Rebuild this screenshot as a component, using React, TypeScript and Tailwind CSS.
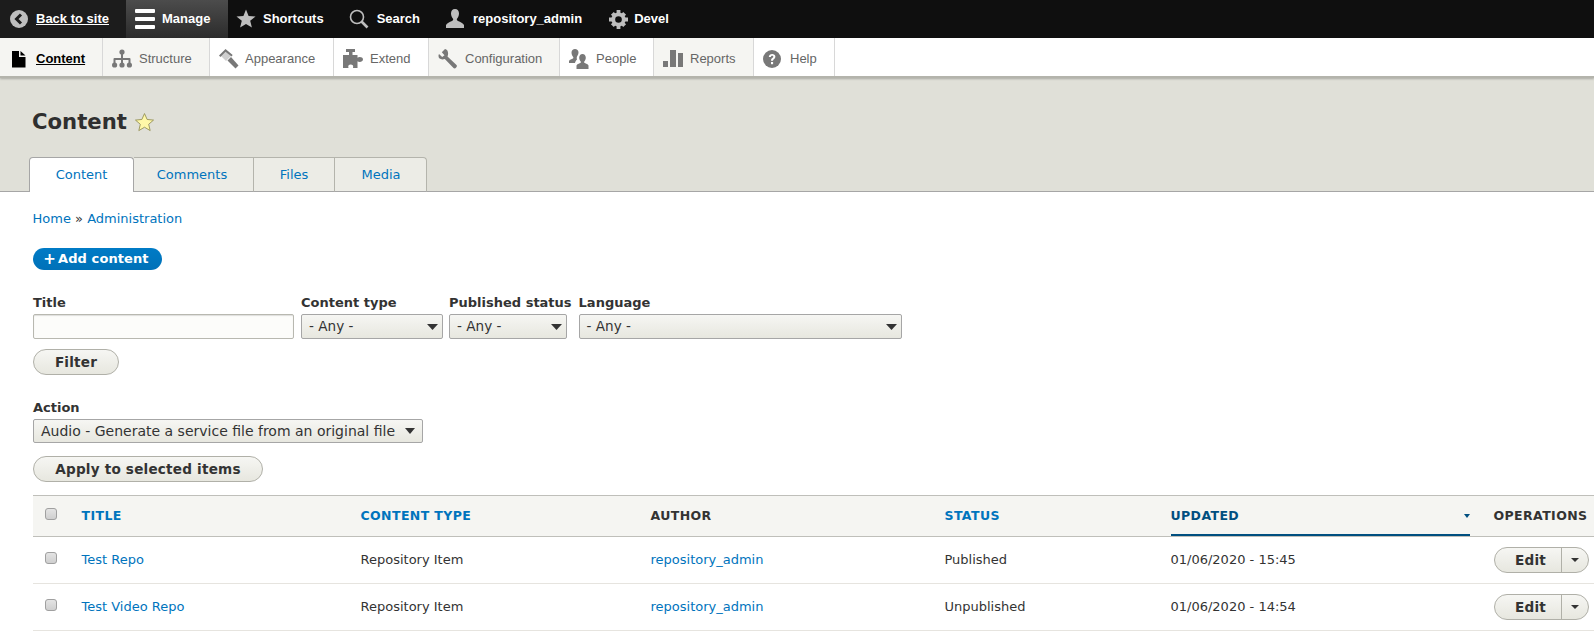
const sans = "font-['Liberation_Sans',Arial,sans-serif]";

function BackIcon() {
  return (
    <svg width="18" height="18" viewBox="0 0 18 18" className="shrink-0">
      <circle cx="9" cy="9" r="9" fill="#bebebe" />
      <path d="M11 4.500 6.500 9l4.500 4.500" fill="none" stroke="#1c1c1c" strokeWidth="3" />
    </svg>
  );
}

function MenuIcon() {
  return (
    <svg width="20" height="20" viewBox="0 0 20 20" className="shrink-0">
      <path d="M1 0h18a1 1 0 0 1 1 1v2a1 1 0 0 1-1 1H1a1 1 0 0 1-1-1V1a1 1 0 0 1 1-1zM1 8h18a1 1 0 0 1 1 1v2a1 1 0 0 1-1 1H1a1 1 0 0 1-1-1V9a1 1 0 0 1 1-1zM1 16h18a1 1 0 0 1 1 1v2a1 1 0 0 1-1 1H1a1 1 0 0 1-1-1v-2a1 1 0 0 1 1-1z" fill="#fff" />
    </svg>
  );
}

function StarIcon() {
  return (
    <svg width="20" height="20" viewBox="0 0 20 20" className="shrink-0">
      <path d="M10 0.500l2.600 6.400 6.900.5-5.300 4.400 1.700 6.700L10 15l-5.900 3.500 1.700-6.700L.5 7.400l6.900-.5z" fill="#bebebe" />
    </svg>
  );
}

function SearchIcon() {
  return (
    <svg width="20" height="20" viewBox="0 0 20 20" className="shrink-0">
      <circle cx="8" cy="8" r="6.500" fill="none" stroke="#bebebe" strokeWidth="1.600" />
      <path d="M12.500 12.500 18.500 18.500" stroke="#bebebe" strokeWidth="2.600" />
    </svg>
  );
}

function UserIcon() {
  return (
    <svg width="20" height="20" viewBox="0 0 20 20" className="shrink-0">
      <path d="M10 0c2.600 0 4 2 4 4.600 0 2.200-1 4-2 5.200-.5.700 0 1.600 1 2.200 2.500 1.300 5 1.800 6 4V19H1v-3c1-2.200 3.500-2.700 6-4 1-.6 1.500-1.500 1-2.200-1-1.200-2-3-2-5.200C6 2 7.400 0 10 0z" fill="#bebebe" />
    </svg>
  );
}

function CogIcon() {
  return (
    <svg width="19" height="19" viewBox="0 0 20 20" className="shrink-0">
      <circle cx="10" cy="10" r="5.500" fill="none" stroke="#bebebe" strokeWidth="4" />
      <path d="M8 0h4v4H8zM8 16h4v4H8zM0 8h4v4H0zM16 8h4v4h-4zM2 5l3-3 3 3-3 3zM12 5l3-3 3 3-3 3zM2 15l3-3 3 3-3 3zM12 15l3-3 3 3-3 3z" fill="#bebebe" />
    </svg>
  );
}

function FileIcon() {
  return (
    <svg width="14" height="18" viewBox="0 0 14 18" className="shrink-0">
      <path d="M0 1h7v6h6.500v10.500H0zM8.500 1l5 4.500h-5z" fill="#000" />
    </svg>
  );
}

function TreeIcon() {
  return (
    <svg width="20" height="19" viewBox="0 0 20 19" className="shrink-0">
      <circle cx="10" cy="3" r="2.600" fill="#787878" />
      <path d="M9 5h2v4h6.500a1 1 0 0 1 1 1v4h-2v-3H11v3H9v-3H3.500v3h-2v-4a1 1 0 0 1 1-1H9z" fill="#787878" />
      <circle cx="2.600" cy="16" r="2.600" fill="#787878" />
      <circle cx="10" cy="16" r="2.600" fill="#787878" />
      <circle cx="17.400" cy="16" r="2.600" fill="#787878" />
    </svg>
  );
}

function BrushIcon() {
  return (
    <svg width="20" height="20" viewBox="0 0 20 20" className="shrink-0">
      <path d="M6.500 1.500 1.500 6.500l5.500 5.500 5-5z" fill="#cfcfcf" />
      <path d="M6.500 0 0 6.500l1.400 1.400 5.100-5.100 6 4.700 1.200-1.400z" fill="#787878" />
      <path d="M8.500 11.500l3.500-3.500 7.500 8.500-3 3z" fill="#787878" />
    </svg>
  );
}

function PuzzleIcon() {
  return (
    <svg width="20" height="20" viewBox="0 0 20 20" className="shrink-0">
      <path d="M3 0h9v3H9.500v3H14.500v2.800c1.300-1.200 5.500-1 5.500 1.700s-4.200 2.900-5.500 1.700V19H10c.8-2.400-.6-3.500-2.300-3.500S4.600 16.600 5.500 19H0V6h6V3H3z" fill="#787878" />
    </svg>
  );
}

function WrenchIcon() {
  return (
    <svg width="20" height="20" viewBox="0 0 20 20" className="shrink-0">
      <path d="M7 0 3.800 3.200l2.700 3L4.200 8 1 5C-.8 9 2.500 11.500 6.800 10l8.700 9c1.600 1.500 4.500-1.300 3-3l-9-8.500C11 3.500 9.500 0.200 7 0z" fill="#787878" />
    </svg>
  );
}

function PeopleIcon() {
  return (
    <svg width="20" height="20" viewBox="0 0 20 20" className="shrink-0">
      <path d="M6 0c2 0 3.500 1.500 3.500 3.500 0 1-.3 2-.8 2.800C7.500 8 7.600 9.500 8 10.500 7 11.500 6 13 6 14H0v-2c.8-1.500 2.500-1.500 4-2.500.5-.4.500-1 0-1.700C3 6.500 2.500 5 2.500 3.500 2.500 1.500 4 0 6 0z" fill="#787878" />
      <path d="M13.500 5c2 0 3.300 1.600 3.300 3.700 0 1.500-.7 2.800-1.500 3.800-.4.600-.2 1.200.5 1.600 1.400.8 3 1 3.700 2.400V20H7.500v-3.500c.7-1.400 2.300-1.600 3.700-2.400.7-.4.900-1 .5-1.600-.8-1-1.500-2.300-1.500-3.800C10.200 6.600 11.500 5 13.500 5z" fill="#787878" />
    </svg>
  );
}

function BarsIcon() {
  return (
    <svg width="20" height="19" viewBox="0 0 20 19" className="shrink-0">
      <path d="M0 12h5v6H0zM7 1h6v17H7zM15 4h5v14h-5z" fill="#787878" />
    </svg>
  );
}

function HelpIcon() {
  return (
    <svg width="18" height="18" viewBox="0 0 18 18" className="shrink-0">
      <circle cx="9" cy="9" r="9" fill="#787878" />
      <path d="M5.800 7c0-4 6.600-4 6.600-.3 0 2.300-2.400 2.300-2.400 4H8c0-2.800 2.300-2.800 2.300-4 0-1.300-2.400-1.200-2.400.3z" fill="#fff" />
      <rect x="8" y="12" width="2.100" height="2.200" fill="#fff" />
    </svg>
  );
}

function Caret({ w = 11, h = 6, color = "#333" }: { w?: number; h?: number; color?: string }) {
  return (
    <svg width={w} height={h} viewBox="0 0 10 6" preserveAspectRatio="none" className="shrink-0">
      <path d="M0 0h10L5 6z" fill={color} />
    </svg>
  );
}

function TopItem({ icon, label, className }: { icon: React.ReactNode; label: string; className?: string }) {
  return (
    <div className={`flex h-full items-center font-bold text-white ${className ?? ""}`}>
      {icon}
      <span>{label}</span>
    </div>
  );
}

const subItems = [
  { label: "Structure", icon: <TreeIcon />, w: "w-[107px]", bg: "bg-[#f5f5f2]", gap: "gap-[7px]" },
  { label: "Appearance", icon: <BrushIcon />, w: "w-[124px]", bg: "bg-white", gap: "gap-[6px]" },
  { label: "Extend", icon: <PuzzleIcon />, w: "w-[95px]", bg: "bg-white", gap: "gap-[7px]" },
  { label: "Configuration", icon: <WrenchIcon />, w: "w-[131px]", bg: "bg-[#f5f5f2]", gap: "gap-[7px]" },
  { label: "People", icon: <PeopleIcon />, w: "w-[94px]", bg: "bg-white", gap: "gap-[7px]" },
  { label: "Reports", icon: <BarsIcon />, w: "w-[100px]", bg: "bg-[#f5f5f2]", gap: "gap-[7px]" },
  { label: "Help", icon: <HelpIcon />, w: "w-[81px]", bg: "bg-white", gap: "gap-[9px]" },
];

function SelectBox({ label, value, className }: { label: string; value: string; className: string }) {
  return (
    <div className="flex flex-col">
      <label className="mb-[2px] text-[13px] leading-[18px] font-bold text-[#333]">{label}</label>
      <div className={`flex h-[25px] items-center justify-between rounded-[2px] border border-[#a6a6a6] bg-linear-to-b from-[#f6f6f3] to-[#e7e7df] pr-[4px] pl-[7px] text-[13.6px] text-[#333] ${className}`}>
        <span>{value}</span>
        <Caret />
      </div>
    </div>
  );
}

function PillButton({ label, className }: { label: string; className: string }) {
  return (
    <button className={`flex h-[26px] items-center justify-center rounded-[13px] border border-[#b0b0a8] bg-linear-to-b from-[#f6f6f3] to-[#e7e7df] text-[13.6px] font-bold tracking-[0.2px] text-[#333] ${className}`}>
      {label}
    </button>
  );
}

function Checkbox() {
  return <div className="-mt-[5px] h-[12px] w-[12px] rounded-[3px] border border-[#a0a0a0] bg-linear-to-b from-[#e4e4e4] to-[#cfcfcf]" />;
}

function EditButton() {
  return (
    <div className="flex h-[26px] w-[95px] overflow-hidden rounded-[13px] border border-[#b0b0a8] bg-linear-to-b from-[#f6f6f3] to-[#e7e7df] text-[13.6px] font-bold tracking-[0.2px] text-[#333]">
      <span className="flex flex-1 items-center justify-center border-r border-[#b0b0a8] pl-[6px]">Edit</span>
      <span className="flex w-[26px] items-center justify-center">
        <Caret w={8} h={4} />
      </span>
    </div>
  );
}

const rows = [
  { title: "Test Repo", status: "Published", updated: "01/06/2020 - 15:45" },
  { title: "Test Video Repo", status: "Unpublished", updated: "01/06/2020 - 14:54" },
];

export default function App() {
  return (
    <div className="h-[631px] w-[1594px] overflow-hidden bg-white font-['DejaVu_Sans',sans-serif] text-[13px] text-[#333]">
      {/* top toolbar */}
      <div className={`flex h-[38px] items-center bg-[#0f0f0f] text-[13px] ${sans}`}>
        <div className="flex h-full w-[126px] items-center gap-2 bg-[#1c1c1c] pl-[10px] font-bold text-white">
          <BackIcon />
          <span className="underline">Back to site</span>
        </div>
        <TopItem
          icon={<MenuIcon />}
          label="Manage"
          className="w-[102px] gap-[7px] bg-linear-to-b from-[#4c4c4c] to-[#2c2c2c] pl-[9px]"
        />
        <TopItem icon={<StarIcon />} label="Shortcuts" className="ml-[8px] gap-[7px]" />
        <TopItem icon={<SearchIcon />} label="Search" className="ml-[25px] gap-2" />
        <TopItem icon={<UserIcon />} label="repository_admin" className="ml-[25px] gap-2" />
        <TopItem icon={<CogIcon />} label="Devel" className="ml-[27px] gap-[6px]" />
      </div>

      {/* admin menu */}
      <div className={`relative z-10 flex h-[40px] border-b-[2px] border-[#b4b4ac] bg-white text-[13px] shadow-[0_1px_2px_rgba(0,0,0,0.25)] ${sans}`}>
        <div className="flex w-[103px] items-center gap-[10px] border-r border-[#d8d8d8] bg-[#f5f5f2] pt-[3px] pl-[12px] font-bold text-black">
          <FileIcon />
          <span className="underline">Content</span>
        </div>
        {subItems.map((item) => (
          <div
            key={item.label}
            className={`flex items-center border-r border-[#d8d8d8] pt-[3px] pl-[9px] text-[#666] ${item.w} ${item.bg} ${item.gap}`}
          >
            {item.icon}
            <span>{item.label}</span>
          </div>
        ))}
      </div>

      {/* page header */}
      <div className="flex h-[114px] flex-col justify-between border-b border-[#a6a6a6] bg-[#e0e0d8] pl-[29px]">
        <div className="flex items-center gap-[7px] pt-[28px] pl-[3px]">
          <h1 className="text-[21.2px] leading-[32px] font-bold text-[#2f2f2f]">Content</h1>
          <svg width="21" height="21" viewBox="0 0 20 20">
            <path d="M10 1.500l2.500 5.600 6.100.6-4.600 4 1.400 6L10 14.500l-5.400 3.200 1.400-6-4.600-4 6.100-.6z" fill="#fff8a8" stroke="#8f8b50" strokeWidth="0.8" />
          </svg>
        </div>
        <div className="-mb-px flex h-[35px] text-[13px] text-[#0074bd]">
          <div className="flex w-[105px] items-center justify-center rounded-t-[4px] border border-b-0 border-[#a6a6a6] bg-white">Content</div>
          <div className="flex w-[120px] items-center justify-center border-y border-r border-[#b4b4ac] border-b-[#a6a6a6] bg-[#ecece6] pr-[3px]">Comments</div>
          <div className="flex w-[81px] items-center justify-center border-y border-r border-[#b4b4ac] border-b-[#a6a6a6] bg-[#ecece6]">Files</div>
          <div className="flex w-[92px] items-center justify-center rounded-tr-[4px] border-y border-r border-[#b4b4ac] border-b-[#a6a6a6] bg-[#ecece6] pl-[1px]">Media</div>
        </div>
      </div>

      {/* page body */}
      <div className="pl-[33px]">
        <div className="-ml-[0.5px] pt-[18px] leading-[18px]">
          <span className="text-[#0074bd]">Home</span> <span>»</span> <span className="text-[#0074bd]">Administration</span>
        </div>

        <button className="mt-[20px] flex h-[22px] w-[129px] items-center justify-center rounded-[11px] bg-linear-to-b from-[#007bc6] to-[#0071b8] pr-[3px] text-[13px] font-bold tracking-[0.1px] text-white">
          <span className="mr-[2px] text-[15px] leading-none">+</span>Add content
        </button>

        <div className="mt-[24px] flex gap-[7px]">
          <div className="flex flex-col">
            <label className="mb-[2px] text-[13px] leading-[18px] font-bold text-[#333]">Title</label>
            <div className="h-[25px] w-[261px] rounded-[2px] border border-[#b8b8b0] bg-[#fcfcfa] shadow-[inset_0_1px_1px_rgba(0,0,0,0.12)]" />
          </div>
          <SelectBox label="Content type" value="- Any -" className="w-[142px]" />
          <div className="-ml-[1px]">
            <SelectBox label="Published status" value="- Any -" className="w-[118px]" />
          </div>
          <SelectBox label="Language" value="- Any -" className="w-[323px]" />
        </div>

        <PillButton label="Filter" className="mt-[10px] w-[86px]" />

        <label className="mt-[24px] block text-[13px] leading-[18px] font-bold text-[#333]">Action</label>
        <div className="mt-[2px] flex h-[24px] w-[390px] items-center justify-between rounded-[2px] border border-[#a6a6a6] bg-linear-to-b from-[#f6f6f3] to-[#e7e7df] pr-[7px] pl-[7px] text-[14px]">
          <span>Audio - Generate a service file from an original file</span>
          <Caret w={10} h={6} />
        </div>

        <PillButton label="Apply to selected items" className="mt-[13px] w-[230px]" />

        <table className="mt-[13px] w-[1561px] table-fixed border-collapse text-left text-[13px]">
          <colgroup>
            <col className="w-[36.5px]" />
            <col className="w-[279px]" />
            <col className="w-[290px]" />
            <col className="w-[294px]" />
            <col className="w-[226px]" />
            <col className="w-[323px]" />
            <col className="w-[112.5px]" />
          </colgroup>
          <thead>
            <tr className="h-[41px] border-y border-[#bfbfba] bg-[#f5f5f2] text-[12.5px] font-bold tracking-[0.4px] uppercase">
              <th className="pl-[12px]"><Checkbox /></th>
              <th className="px-[12px] text-[#0074bd]">Title</th>
              <th className="px-[12px] text-[#0074bd]">Content type</th>
              <th className="px-[12px] text-[#333]">Author</th>
              <th className="px-[12px] text-[#0074bd]">Status</th>
              <th className="px-[12px] text-[#004f80]">
                <div className="flex h-[40px] items-center justify-between border-b-[2px] border-[#004f80] pt-[2px]">
                  <span>Updated</span>
                  <Caret w={6} h={4} color="#004f80" />
                </div>
              </th>
              <th className="px-[12px] text-[#333]">Operations</th>
            </tr>
          </thead>
          <tbody>
            {rows.map((row) => (
              <tr key={row.title} className="h-[47px] border-b border-[#e6e4df]">
                <td className="pl-[12px]"><Checkbox /></td>
                <td className="px-[12px] text-[#0074bd]">{row.title}</td>
                <td className="px-[12px]">Repository Item</td>
                <td className="px-[12px] text-[#0074bd]">repository_admin</td>
                <td className="px-[12px]">{row.status}</td>
                <td className="px-[12px]">{row.updated}</td>
                <td className="px-[12px]"><EditButton /></td>
              </tr>
            ))}
          </tbody>
        </table>
      </div>
    </div>
  );
}
